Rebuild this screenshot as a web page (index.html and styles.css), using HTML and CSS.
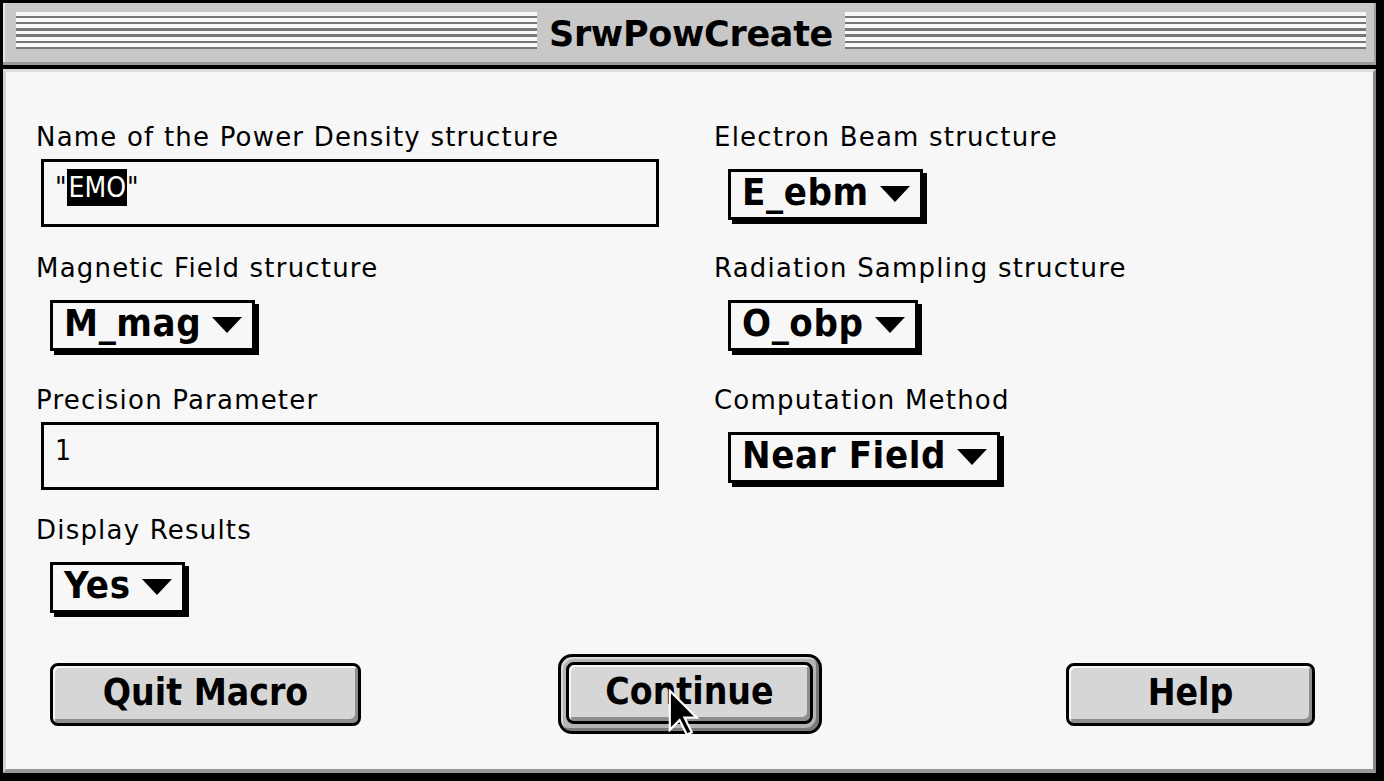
FILE: index.html
```html
<!DOCTYPE html>
<html>
<head>
<meta charset="utf-8">
<title>SrwPowCreate</title>
<link rel="stylesheet" href="styles.css">
</head>
<body>
<div class="window">
  <div class="titlebar">
    <div class="stripes"></div>
    <div class="title">SrwPowCreate</div>
    <div class="stripes"></div>
  </div>
  <div class="sep"></div>
  <div class="content">
    <div class="form">
      <div class="cell">
        <div class="label">Name of the Power Density structure</div>
        <div class="field">"<span class="sel">EMO</span>"</div>
      </div>
      <div class="cell">
        <div class="label">Electron Beam structure</div>
        <div class="popup">E_ebm<span class="tri"></span></div>
      </div>
      <div class="cell">
        <div class="label">Magnetic Field structure</div>
        <div class="popup">M_mag<span class="tri"></span></div>
      </div>
      <div class="cell">
        <div class="label">Radiation Sampling structure</div>
        <div class="popup">O_obp<span class="tri"></span></div>
      </div>
      <div class="cell">
        <div class="label">Precision Parameter</div>
        <div class="field">1</div>
      </div>
      <div class="cell">
        <div class="label">Computation Method</div>
        <div class="popup">Near Field<span class="tri"></span></div>
      </div>
      <div class="cell">
        <div class="label">Display Results</div>
        <div class="popup">Yes<span class="tri"></span></div>
      </div>
      <div class="cell"></div>
    </div>
    <div class="buttons">
      <div class="btn btn-quit">Quit Macro</div>
      <div class="default-ring"><div class="btn btn-continue">Continue</div></div>
      <div class="btn btn-help">Help</div>
    </div>
  </div>
  <svg class="cursor" width="32" height="48" viewBox="0 0 13 19.6">
    <path d="M0.7 0.7 L0.7 16.7 L4.7 12.7 L7.7 18.7 L9.7 17.7 L6.7 11.7 L11.7 11.7 Z" fill="#000" stroke="#fff" stroke-width="0.9" stroke-linejoin="miter"/>
  </svg>
</div>
</body>
</html>
```
FILE: styles.css
```css
html, body {
  margin: 0;
  padding: 0;
  background: #000;
}

.window {
  position: relative;
  width: 1384px;
  height: 781px;
  box-sizing: border-box;
  padding: 3px 8px 8px 3px;
  background: #000;
  display: flex;
  flex-direction: column;
  font-family: "DejaVu Sans", sans-serif;
  color: #000;
}

.titlebar {
  height: 59px;
  box-sizing: border-box;
  background: #c8c8c8;
  border-left: 2px solid #e4e4e4;
  border-right: 2px solid #a0a0a0;
  padding: 9px 8px 0 11px;
  display: flex;
  align-items: flex-start;
}

.stripes {
  flex: 1;
  height: 37.4px;
  background: repeating-linear-gradient(to bottom, #f8f8f8 0, #f8f8f8 3.9px, #767676 3.9px, #767676 6.2px);
}

.title {
  padding: 3px 12px 0 12px;
  font-family: "DejaVu Sans", sans-serif;
  font-weight: bold;
  font-size: 35px;
  line-height: 38px;
  letter-spacing: -0.3px;
}

.sep {
  height: 3px;
  background: #9a9a9a;
  border-bottom: 4px solid #000;
}

.content {
  flex: 1;
  background: #f7f7f7;
  border-top: 3px solid #dcdcdc;
  border-left: 3px solid #d4d4d4;
  border-right: 3px solid #888;
  border-bottom: 4px solid #999;
  display: flex;
  flex-direction: column;
}

.form {
  display: grid;
  grid-template-columns: 678px 1fr;
  grid-template-rows: 131px 132px 130px 139px;
  padding: 50px 0 0 30px;
}

.cell {
  display: flex;
  flex-direction: column;
  align-items: flex-start;
}

.label {
  font-family: "DejaVu Sans", sans-serif;
  font-size: 26px;
  line-height: 30px;
  height: 30px;
  letter-spacing: 1.2px;
  white-space: nowrap;
}

.field {
  margin-top: 7px;
  margin-left: 5px;
  width: 618px;
  height: 68px;
  box-sizing: border-box;
  border: 3px solid #000;
  padding: 7px 0 0 11px;
  font-family: "DejaVu Sans Condensed", "DejaVu Sans", sans-serif;
  font-stretch: condensed;
  font-size: 28px;
  line-height: 37px;
  white-space: nowrap;
}

.sel {
  display: inline-block;
  background: #000;
  color: #fff;
  padding: 0 1px 0 2px;
  line-height: 37px;
}

.popup {
  margin-top: 17px;
  margin-left: 14px;
  border: 3px solid #000;
  background: #f7f7f7;
  box-shadow: 4px 4px 0 #000;
  padding: 0 10px 5px 11px;
  font-family: "DejaVu Sans Condensed", "DejaVu Sans", sans-serif;
  font-stretch: condensed;
  font-weight: bold;
  font-size: 38px;
  line-height: 40px;
  letter-spacing: 0.6px;
  white-space: nowrap;
}

.tri {
  display: inline-block;
  width: 0;
  height: 0;
  margin-left: 11px;
  margin-bottom: 3px;
  border-left: 15px solid transparent;
  border-right: 15px solid transparent;
  border-top: 16px solid #000;
}

.buttons {
  display: flex;
  align-items: center;
  height: 80px;
  padding-left: 44px;
}

.btn {
  box-sizing: border-box;
  height: 63px;
  border: 3px solid #000;
  border-radius: 8px;
  background: #d6d6d6;
  box-shadow: inset 2px 2px 0 #f6f6f6, inset -3px -4px 0 #8e8e8e;
  display: flex;
  align-items: center;
  justify-content: center;
  padding-bottom: 4px;
  font-family: "DejaVu Sans Condensed", "DejaVu Sans", sans-serif;
  font-stretch: condensed;
  font-weight: bold;
  font-size: 37px;
  white-space: nowrap;
}

.btn-quit {
  width: 311px;
}

.default-ring {
  margin-left: 197px;
  width: 264px;
  height: 80px;
  box-sizing: border-box;
  border: 3px solid #000;
  border-radius: 14px;
  background: #b4b4b4;
  box-shadow: inset 2px 2px 0 #d8d8d8, inset -3px -3px 0 #7a7a7a;
  padding: 5px 6px 7px 5px;
}

.btn-continue {
  width: 247px;
  height: 62px;
}

.btn-help {
  margin-left: 244px;
  width: 249px;
}

.cursor {
  position: absolute;
  left: 668px;
  top: 689px;
}
```
